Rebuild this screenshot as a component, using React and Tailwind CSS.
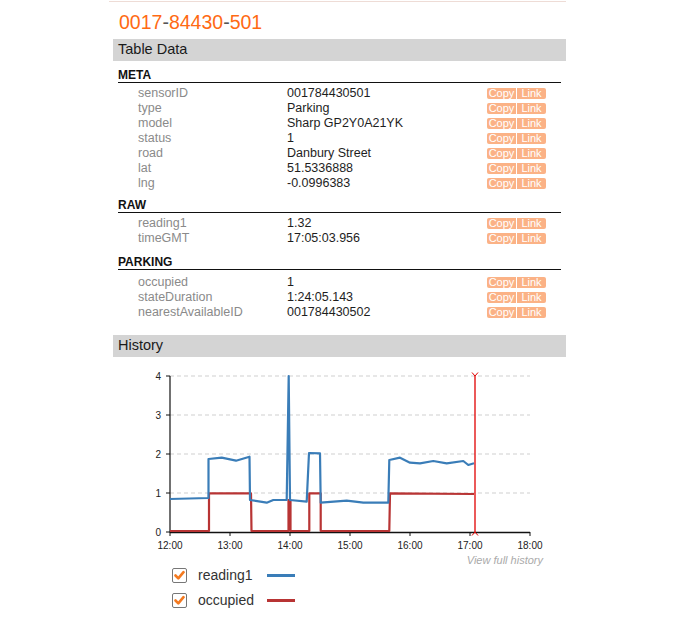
import React from 'react';

const sections = [
  {
    title: 'META',
    head: 'mt-2',
    gap: 'mt-[3px]',
    rows: [
      ['sensorID', '001784430501'],
      ['type', 'Parking'],
      ['model', 'Sharp GP2Y0A21YK'],
      ['status', '1'],
      ['road', 'Danbury Street'],
      ['lat', '51.5336888'],
      ['lng', '-0.0996383'],
    ],
  },
  {
    title: 'RAW',
    head: 'mt-2',
    gap: 'mt-[3px]',
    rows: [
      ['reading1', '1.32'],
      ['timeGMT', '17:05:03.956'],
    ],
  },
  {
    title: 'PARKING',
    head: 'mt-[10px]',
    gap: 'mt-[5px]',
    rows: [
      ['occupied', '1'],
      ['stateDuration', '1:24:05.143'],
      ['nearestAvailableID', '001784430502'],
    ],
  },
];

const blue = [
  [30, 134], [68.5, 133], [68.5, 94], [81.7, 92.7], [96, 95.7], [109.5, 91.7],
  [110, 135], [126.7, 137.7], [133.3, 135], [146.7, 135], [148.7, 11], [150, 135],
  [166.7, 136.7], [169, 88], [180, 88.3], [180.7, 137.7], [206.7, 135.7],
  [223.3, 137.7], [248.3, 137.7], [249.3, 95], [260, 92.7], [270, 97.7],
  [280, 98.3], [293.3, 96], [306.7, 98.3], [323.3, 96], [328.3, 100], [334, 98.3],
];

const red = [
  [30, 166], [69, 166], [69, 128.3], [111, 128.3], [111.5, 166], [148.5, 166],
  [148.5, 135], [150.5, 135], [150.5, 166], [169.3, 166], [169.3, 128.3],
  [180.7, 128.3], [180.7, 166], [249.3, 166], [250, 128.3], [334, 129],
];

const pts = (arr) => arr.map((p) => p.join(',')).join(' ');

const SectionBar = ({ children }) => (
  <div className="ml-1 h-[22px] flex items-center pl-[5px] bg-[#d4d4d4] text-[14.5px] text-[#1a1a1a]">
    {children}
  </div>
);

const CopyLink = () => (
  <div className="flex h-[11px] text-[11px] leading-[11px] text-white">
    <span className="w-[29px] text-center bg-[#fbb286] rounded-l-[2px]">Copy</span>
    <span className="w-px bg-white"></span>
    <span className="w-[29px] text-center bg-[#fbb286] rounded-r-[2px]">Link</span>
  </div>
);

const Chart = () => (
  <svg width="410" height="188" className="ml-[31px] mt-2 block">
    {[11, 50, 89, 128].map((y) => (
      <line key={y} x1="30" x2="390" y1={y} y2={y} stroke="#cfcfcf" strokeDasharray="4 3" />
    ))}
    {[[11, '4'], [50, '3'], [89, '2'], [128, '1'], [167, '0']].map(([y, t]) => (
      <g key={t}>
        <line x1="26" x2="30" y1={y} y2={y} stroke="#111" />
        <text x="21" y={y + 3.5} fontSize="10" textAnchor="end" fill="#222" fontFamily="Liberation Sans, Arial, sans-serif">{t}</text>
      </g>
    ))}
    <line x1="30" x2="30" y1="11" y2="167.5" stroke="#111" strokeWidth="1.2" />
    <line x1="30" x2="390" y1="167.5" y2="167.5" stroke="#111" strokeWidth="1.5" />
    {['12:00', '13:00', '14:00', '15:00', '16:00', '17:00', '18:00'].map((t, i) => (
      <g key={t}>
        <line x1={30 + i * 60} x2={30 + i * 60} y1="167" y2="171" stroke="#111" />
        <text x={30 + i * 60} y="183.5" fontSize="10" textAnchor="middle" fill="#222" fontFamily="Liberation Sans, Arial, sans-serif">{t}</text>
      </g>
    ))}
    <polyline points={pts(red)} fill="none" stroke="#b83434" strokeWidth="2.2" strokeLinejoin="round" />
    <polyline points={pts(blue)} fill="none" stroke="#3a7db8" strokeWidth="2.2" strokeLinejoin="round" />
    <line x1="335" x2="335" y1="11" y2="167" stroke="#e10000" strokeWidth="1.3" />
    <polyline points="332,7.5 335,11 338,7.5" fill="none" stroke="#e10000" />
    <polyline points="332,170.5 335,167 338,170.5" fill="none" stroke="#e10000" />
  </svg>
);

const Legend = ({ label, color }) => (
  <div className="h-[25px] flex items-center">
    <div className="w-[15px] h-[15px] border border-[#777] rounded-[2px] bg-white flex items-center justify-center">
      <svg width="11" height="11" viewBox="0 0 11 11">
        <polyline points="1.5,5.5 4.3,8.3 9.5,2.2" fill="none" stroke="#f47a20" strokeWidth="2.6" strokeLinecap="round" strokeLinejoin="round" />
      </svg>
    </div>
    <span className="ml-[11px] w-[69px] text-[14px] text-[#333]">{label}</span>
    <span className="w-[28px] h-[2.5px]" style={{ backgroundColor: color }}></span>
  </div>
);

export default function App() {
  return (
    <div className="min-h-[644px] bg-white font-['Liberation_Sans',Arial,sans-serif]">
      <div className="ml-[109px] w-[457px] mt-px border-t border-[#eedcd6]">
        <div className="pt-2 pl-[10px] h-[37px] text-[19.5px] leading-[24px] text-[#ff6a13]">
          0017<span className="text-[#555]">-</span>84430<span className="text-[#555]">-</span>501
        </div>
        <SectionBar>Table Data</SectionBar>

        {sections.map((s) => (
          <div key={s.title}>
            <div className={`${s.head} ml-[9px] mr-[5px] h-[14px] border-b border-[#111] text-[12px] leading-[13px] font-bold text-[#111]`}>
              {s.title}
            </div>
            <div className={s.gap}>
              {s.rows.map(([k, v]) => (
                <div key={k} className="h-[15px] flex items-center pl-[29px] pr-[20px] text-[12.5px] leading-[15px]">
                  <span className="w-[149px] text-[#8a8a8a]">{k}</span>
                  <span className="flex-1 text-[#1e1e1e]">{v}</span>
                  <CopyLink />
                </div>
              ))}
            </div>
          </div>
        ))}

        <div className="mt-[15px]">
          <SectionBar>History</SectionBar>
        </div>
        <Chart />
        <div className="pr-[23px] text-right text-[11px] leading-[14px] italic text-[#aaa]">View full history</div>
        <div className="-mt-1 ml-[63px]">
          <Legend label="reading1" color="#3a7db8" />
          <Legend label="occupied" color="#b83434" />
        </div>
      </div>
    </div>
  );
}
